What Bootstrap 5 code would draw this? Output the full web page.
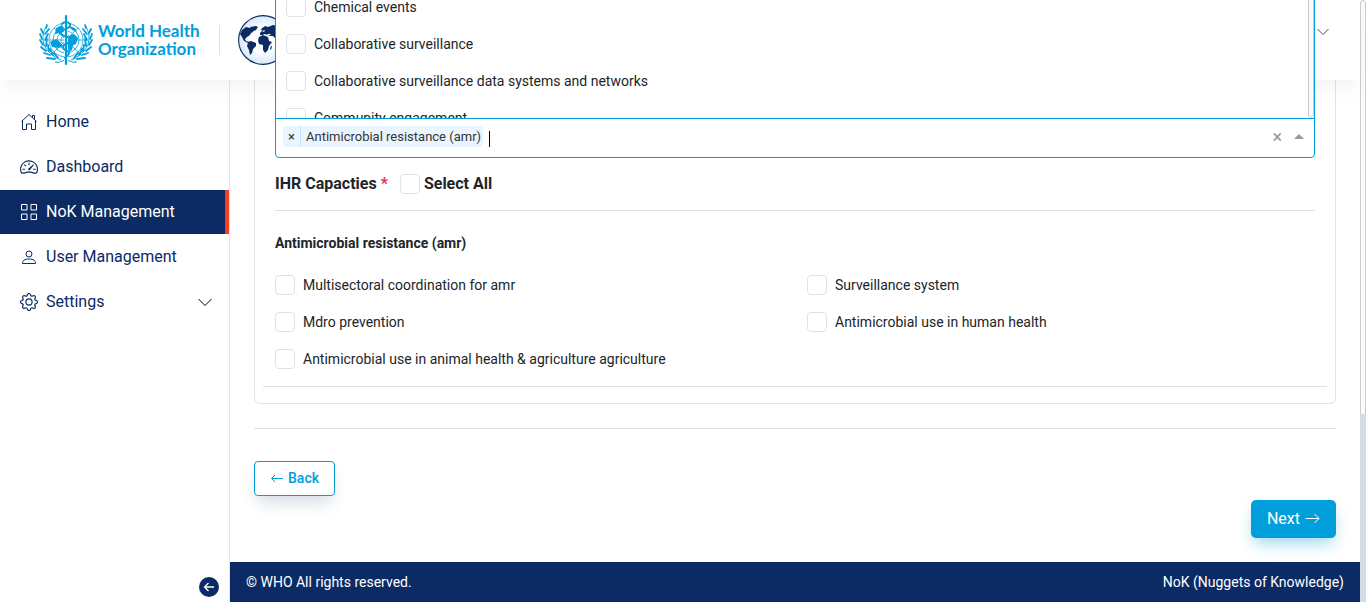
<!DOCTYPE html>
<html lang="en">
<head>
<meta charset="utf-8">
<meta name="viewport" content="width=device-width, initial-scale=1">
<title>NoK Management</title>
<link href="https://cdn.jsdelivr.net/npm/bootstrap@5.3.0/dist/css/bootstrap.min.css" rel="stylesheet">
<style>
:root { --navy: #0c2a63; --who: #009edb; --line: #e0e3e8; --accent: #ff3a20; }
body { font-family: Roboto, "Liberation Sans", sans-serif; font-size: 14px; line-height: 21px; color: #212529; }
svg { display: block; flex: none; }
hr { border-color: #dcdfe6; opacity: 1; }

/* Header */
.site-header { height: 80px; padding: 0 36px; background: #fff; box-shadow: 0 12px 16px -4px rgba(140, 152, 164, .1); z-index: 10; }
.who-brand { color: var(--who); gap: 3px; text-decoration: none; }
.who-name { font: bold 17px/18px Lato, sans-serif; }
.who-name span { display: block; }
.brand-rule { width: 1px; height: 30px; background: #dfe2e6; margin: 0 18px 0 19px; }
.account-toggle { padding: 0; border: 0; background: none; color: #495057; margin-bottom: 17px; margin-right: -5px; }

/* Sidebar */
.side-menu { width: 230px; border-right: 1px solid #e3e6ea; padding-top: 20px; flex: none; }
.side-menu .nav { gap: 1px; }
.side-menu .nav-link { height: 44px; padding: 0 16px 2px 20px; gap: 8px; font-size: 16px; color: var(--navy); }
.side-menu .nav-link svg { margin-top: 2px; }
.side-menu .nav-link.active { background: var(--navy); color: #fff; border-right: 4px solid var(--accent); }
.collapse-btn { width: 20px; height: 20px; padding: 0; border: 0; border-radius: 50%; background: var(--navy); color: #fff; margin: 0 10px 5px 0; }

/* Form */
.form-area { padding: 0 24px 24px; }
.form-panel { border: 1px solid var(--line); border-top: 0; border-radius: 0 0 6px 6px; padding: 38px 20px 16px; }
.picker { border: 1px solid var(--who); border-radius: 0 0 4px 4px; height: 40px; padding: 0 10px 3px 7px; background: #fff; z-index: 20; }
.picker-tag { background: #ebf5ff; border-radius: 2px; font-size: 13px; line-height: 21px; color: #333; margin-right: 6px; }
.picker-tag button { border: 0; border-right: 1px solid #c2e0ff; background: none; padding: 0; width: 18px; line-height: 19px; color: #333; }
.picker-tag span { padding: 0 2px 0 5px; }
.picker-input { border: 0; outline: 0; width: 40px; padding: 0; background: none; }
.caret { width: 1px; height: 16px; background: #000; margin-top: 4px; }
.clear-btn { border: 0; background: none; padding: 0; color: #999; font-size: 18px; line-height: 18px; }
.arrow-up { border: 5px solid transparent; border-top: 0; border-bottom-color: #999; margin-left: 12px; }
.picker-menu { position: absolute; bottom: 100%; left: -1px; right: -1px; height: 131px; overflow: hidden; background: #fff; border: 1px solid var(--who); border-top: 0; }
.menu-item { height: 37px; padding: 9px 10px 8px; gap: 8px; }
.menu-track { position: absolute; right: 0; top: 0; bottom: 0; width: 6px; border: 1px solid #ccc; border-radius: 3px; background: #fafafa; }
.form-check-input { width: 20px; height: 20px; margin: 0; border-color: #dee2e6; flex: none; }
.form-check-input[type=checkbox] { border-radius: 4px; }
.group-title { font-size: 16px; line-height: 24px; font-weight: 700; margin: 14px 0; }
.group-title input { margin: 0 4px 0 12px; }
.group-sub { font-size: 14px; line-height: 21px; margin: 22px 0 13px; }
.capacity { gap: 8px; height: 37px; padding-bottom: 1px; }
.edge-rule { margin: 8px -12px 0; }
.actions-rule { margin: 24px 0 32px; }

/* Buttons */
.btn-back { height: 35px; padding: 0 15px; gap: 4px; color: var(--who); border: 1px solid var(--who); border-radius: 4px; background: #fff; font-size: 14px; font-weight: 500; box-shadow: 0 10px 16px -4px rgba(12, 42, 99, .18); }
.btn-next { height: 38px; padding: 0 16px; gap: 4px; color: #fff; background: var(--who); border: 0; border-radius: 5px; font-size: 16px; box-shadow: 0 8px 16px -3px rgba(0, 158, 219, .4); }
.site-footer { height: 40px; padding: 0 16px; background: var(--navy); color: #fff; }

/* Page scroll track */
.page-track { width: 6px; flex: none; border: 1px solid #ccc; border-radius: 3px; background: #fafafa; }
.page-thumb { height: 188px; margin: 0 -1px -1px; background: #d2dde8; }
</style>
</head>
<body>
<div class="d-flex min-vh-100">
<div class="flex-fill d-flex flex-column">
  <header class="site-header position-relative d-flex align-items-center">
    <a class="who-brand d-flex align-items-center" href="#">
      <svg width="59" height="52" viewBox="0 0 59 52" fill="none" stroke="currentColor">
        <g stroke-width=".8">
          <circle cx="30" cy="26" r="17"/><circle cx="30" cy="26" r="13"/><circle cx="30" cy="26" r="9"/><circle cx="30" cy="26" r="5"/>
          <path d="M13 26h34M18 14l24 24M42 14L18 38"/>
        </g>
        <path fill="currentColor" stroke="none" d="M14 28l6-3 4 3 3 4-4 2-7-1zM20 14l6-3 2 4-4 4-5 1zM33 22l5-2 4 4-2 6-3 1-1 5-3 2-2-7zM33 12l6 2 2 4-5-2z"/>
        <path stroke-width="1" d="M10 13C3 25 8 39 25 46M50 13c7 12 2 26-15 33M19 48c6 1 9-2 11-3 2 1 5 4 11 3"/>
        <path stroke-width="1.800" stroke-linecap="round" d="M10 14l1-3M7 19L5 15M9 20l4-5M6 25l-2-5M9 26l3-6M7 31l-3-5M10 32l1-7M10 37l-5-4M13 37l-1-6M14 41l-6-2M17 41l-3-6M19 45l-8-1M22 44l-4-5M50 14l-1-3M53 19l2-4M51 20l-4-5M54 25l2-5M51 26l-3-6M53 31l3-5M50 32l-1-7M50 37l5-4M47 37l1-6M46 41l6-2M43 41l3-6M41 45l8-1M38 44l4-5"/>
        <path stroke="#fff" stroke-width="4" d="M30 5v43"/>
        <path stroke-width="2.200" stroke-linecap="round" d="M30 2v48"/>
        <path stroke-width="2" stroke-linecap="round" d="M26 10c2-3 9-2 8 2-1 3-9 3-9 7s10 3 10 7-8 3-8 7 6 3 6 6-4 3-4 5"/>
      </svg>
      <span class="who-name"><span>World Health</span><span>Organization</span></span>
    </a>
    <span class="brand-rule"></span>
    <svg width="50" height="50" viewBox="0 0 50 50">
      <defs><radialGradient id="sea"><stop offset=".5" stop-color="#fff"/><stop offset="1" stop-color="#d6e7fb"/></radialGradient></defs>
      <circle cx="25" cy="25" r="24.400" fill="url(#sea)" stroke="#0c2a63" stroke-width="1.100"/>
      <path fill="#0c2a63" d="M2 19l2-4 4-3 4 1 2-1 2 2-1 3-2 1-1 2-3 2-2 2 1 2 3 1-1 1-4-2-2-4zM12 12l6-1 2 1-2 3-2 1zM10 27l3-1 5 2v3l-3 3-1 4-2 2-1-5-2-4zM22 18l2-2-1-2 4-3 3 1 5-2 10 2v12l-3 3-2 2-2-5-3-3-3 0-2-1-4-1-1 1-3 0zM21 22l4-2 5 2 1 4 3 1-3 4-1 4-3 3-2-3 0-5-4-1-1-4z"/>
      <path fill="#fff" d="M24 16l3-1-1 2zM29 19l3 0 1 1-3 0z"/>
      <path fill="#0c2a63" d="M34 31l-1 4-1-1 1-3zM37 37l6-2v4l-4 1z"/>
    </svg>
    <button class="account-toggle ms-auto" aria-label="Account menu"><svg width="12" height="12" viewBox="0 0 12 12" fill="none" stroke="currentColor" stroke-width="1"><path d="M.5 3L6 8.500 11.500 3"/></svg></button>
  </header>

  <div class="d-flex flex-fill">
    <aside class="side-menu d-flex flex-column">
      <nav class="nav flex-column flex-nowrap">
        <a class="nav-link d-flex align-items-center" href="#"><svg width="18" height="18" viewBox="0 0 18 18" fill="none" stroke="currentColor"><path d="M2.500 8v8.500h4V11h5v5.500h4V8M1.500 8.500L9 1.500l7.500 7M12.500 4.500v-2h2v4"/></svg>Home</a>
        <a class="nav-link d-flex align-items-center" href="#"><svg width="18" height="18" viewBox="0 0 16 16" fill="currentColor"><path d="M8 4a.5.5 0 0 1 .5.5V6a.5.5 0 0 1-1 0V4.500A.5.5 0 0 1 8 4zM3.732 5.732a.5.5 0 0 1 .707 0l.915.914a.5.5 0 1 1-.708.708l-.914-.915a.5.5 0 0 1 0-.707zM2 10a.5.5 0 0 1 .5-.5h1.586a.5.5 0 0 1 0 1H2.500A.5.5 0 0 1 2 10zm9.500 0a.5.5 0 0 1 .5-.5h1.500a.5.5 0 0 1 0 1H12a.5.5 0 0 1-.5-.5zm.754-4.246a.389.389 0 0 0-.527-.02L7.547 9.310a.91.91 0 1 0 1.302 1.258l3.434-4.297a.389.389 0 0 0-.029-.518z"/><path fill-rule="evenodd" d="M0 10a8 8 0 1 1 15.547 2.661c-.442 1.253-1.845 1.602-2.932 1.250C11.309 13.488 9.475 13 8 13c-1.474 0-3.310.488-4.615.911-1.087.352-2.490.003-2.932-1.250A7.988 7.988 0 0 1 0 10zm8-7a7 7 0 0 0-6.603 9.329c.203.575.923.876 1.680.630C4.397 12.533 6.358 12 8 12s3.604.532 4.923.960c.757.245 1.477-.056 1.680-.631A7 7 0 0 0 8 3z"/></svg>Dashboard</a>
        <a class="nav-link active d-flex align-items-center" href="#" aria-current="page"><svg width="18" height="18" viewBox="0 0 18 18" fill="none" stroke="currentColor" stroke-linejoin="round"><path d="M1.500 1.500h5.500v5.500h-5.500zM11 1.500h5.500v5.500h-5.500zM1.500 11h5.500v5.500h-5.500zM11 11h5.500v5.500h-5.500z"/></svg>NoK Management</a>
        <a class="nav-link d-flex align-items-center" href="#"><svg width="18" height="18" viewBox="0 0 18 18" fill="none" stroke="currentColor"><circle cx="9" cy="6" r="3"/><path d="M2.500 15.500c0-3 2-4.500 6.500-4.500s6.500 1.500 6.500 4.500z" stroke-linejoin="round"/></svg>User Management</a>
        <a class="nav-link d-flex align-items-center" href="#"><svg width="18" height="18" viewBox="0 0 16 16" fill="currentColor"><path d="M8 4.754a3.246 3.246 0 1 0 0 6.492 3.246 3.246 0 0 0 0-6.492zM5.754 8a2.246 2.246 0 1 1 4.492 0 2.246 2.246 0 0 1-4.492 0z"/><path d="M9.796 1.343c-.527-1.790-3.065-1.790-3.592 0l-.094.319a.873.873 0 0 1-1.255.520l-.292-.160c-1.640-.892-3.433.902-2.540 2.541l.159.292a.873.873 0 0 1-.520 1.255l-.319.094c-1.790.527-1.790 3.065 0 3.592l.319.094a.873.873 0 0 1 .520 1.255l-.160.292c-.892 1.640.901 3.434 2.541 2.540l.292-.159a.873.873 0 0 1 1.255.520l.094.319c.527 1.790 3.065 1.790 3.592 0l.094-.319a.873.873 0 0 1 1.255-.520l.292.160c1.640.893 3.434-.902 2.540-2.541l-.159-.292a.873.873 0 0 1 .520-1.255l.319-.094c1.790-.527 1.790-3.065 0-3.592l-.319-.094a.873.873 0 0 1-.520-1.255l.160-.292c.893-1.640-.902-3.433-2.541-2.540l-.292.159a.873.873 0 0 1-1.255-.520l-.094-.319zm-2.633.283c.246-.835 1.428-.835 1.674 0l.094.319a1.873 1.873 0 0 0 2.693 1.115l.291-.160c.764-.415 1.600.420 1.184 1.185l-.159.292a1.873 1.873 0 0 0 1.116 2.692l.318.094c.835.246.835 1.428 0 1.674l-.319.094a1.873 1.873 0 0 0-1.115 2.693l.160.291c.415.764-.420 1.600-1.185 1.184l-.291-.159a1.873 1.873 0 0 0-2.693 1.116l-.094.318c-.246.835-1.428.835-1.674 0l-.094-.319a1.873 1.873 0 0 0-2.692-1.115l-.292.160c-.764.415-1.600-.420-1.184-1.185l.159-.291A1.873 1.873 0 0 0 1.945 8.930l-.319-.094c-.835-.246-.835-1.428 0-1.674l.319-.094A1.873 1.873 0 0 0 3.060 4.377l-.160-.292c-.415-.764.420-1.600 1.185-1.184l.292.159a1.873 1.873 0 0 0 2.692-1.115l.094-.319z"/></svg>Settings
          <svg class="ms-auto text-black" width="16" height="16" viewBox="0 0 16 16" fill="none" stroke="currentColor"><path d="M1.500 5L8 11.500 14.500 5"/></svg></a>
      </nav>
      <button class="collapse-btn mt-auto ms-auto d-flex align-items-center justify-content-center" aria-label="Collapse menu"><svg width="12" height="12" viewBox="0 0 12 12" fill="none" stroke="currentColor" stroke-width="1.300"><path d="M11 6H1.500M5.500 2l-4 4 4 4"/></svg></button>
    </aside>

    <div class="flex-fill d-flex flex-column">
      <main class="form-area flex-fill">
        <section class="form-panel">
          <div class="picker position-relative d-flex align-items-center">
            <div class="picker-menu">
              <label class="menu-item d-flex align-items-center"><input class="form-check-input" type="checkbox">Chemical events</label>
              <label class="menu-item d-flex align-items-center"><input class="form-check-input" type="checkbox">Collaborative surveillance</label>
              <label class="menu-item d-flex align-items-center"><input class="form-check-input" type="checkbox">Collaborative surveillance data systems and networks</label>
              <label class="menu-item d-flex align-items-center"><input class="form-check-input" type="checkbox">Community engagement</label>
              <div class="menu-track"></div>
            </div>
            <div class="picker-tag d-flex"><button aria-label="Remove">×</button><span>Antimicrobial resistance (amr)</span></div>
            <div class="caret"></div><input class="picker-input flex-fill" type="text" aria-label="Search capacities">
            <button class="clear-btn" aria-label="Clear all">×</button>
            <div class="arrow-up"></div>
          </div>

          <div class="group-title d-flex align-items-center">
            <span>IHR Capacties <span class="text-danger">*</span></span>
            <input class="form-check-input" type="checkbox" id="all"><label for="all">Select All</label>
          </div>
          <hr class="m-0">
          <h6 class="group-sub fw-bold">Antimicrobial resistance (amr)</h6>
          <div class="row">
            <div class="col-6"><label class="capacity d-flex align-items-center"><input class="form-check-input" type="checkbox">Multisectoral coordination for amr</label></div>
            <div class="col-6"><label class="capacity d-flex align-items-center"><input class="form-check-input" type="checkbox">Surveillance system</label></div>
            <div class="col-6"><label class="capacity d-flex align-items-center"><input class="form-check-input" type="checkbox">Mdro prevention</label></div>
            <div class="col-6"><label class="capacity d-flex align-items-center"><input class="form-check-input" type="checkbox">Antimicrobial use in human health</label></div>
            <div class="col-6"><label class="capacity d-flex align-items-center"><input class="form-check-input" type="checkbox">Antimicrobial use in animal health &amp; agriculture agriculture</label></div>
          </div>
          <hr class="edge-rule">
        </section>
        <hr class="actions-rule">
        <button class="btn btn-back d-flex align-items-center"><svg width="14" height="14" viewBox="0 0 14 14" fill="none" stroke="currentColor"><path d="M13 6.500H1.500M5 3L1.500 6.500 5 10"/></svg>Back</button>
        <button class="btn btn-next d-flex align-items-center ms-auto mt-1">Next<svg width="16" height="16" viewBox="0 0 16 16" fill="none" stroke="currentColor"><path d="M1.500 7.500h13.500M10.500 3l4.500 4.500-4.500 4.500"/></svg></button>
      </main>
      <footer class="site-footer d-flex align-items-center justify-content-between">
        <span>© WHO All rights reserved.</span><span>NoK (Nuggets of Knowledge)</span>
      </footer>
    </div>
  </div>
</div>
<div class="page-track d-flex flex-column justify-content-end"><div class="page-thumb"></div></div>
</div>
<script src="https://cdn.jsdelivr.net/npm/bootstrap@5.3.0/dist/js/bootstrap.bundle.min.js"></script>
</body>
</html>
